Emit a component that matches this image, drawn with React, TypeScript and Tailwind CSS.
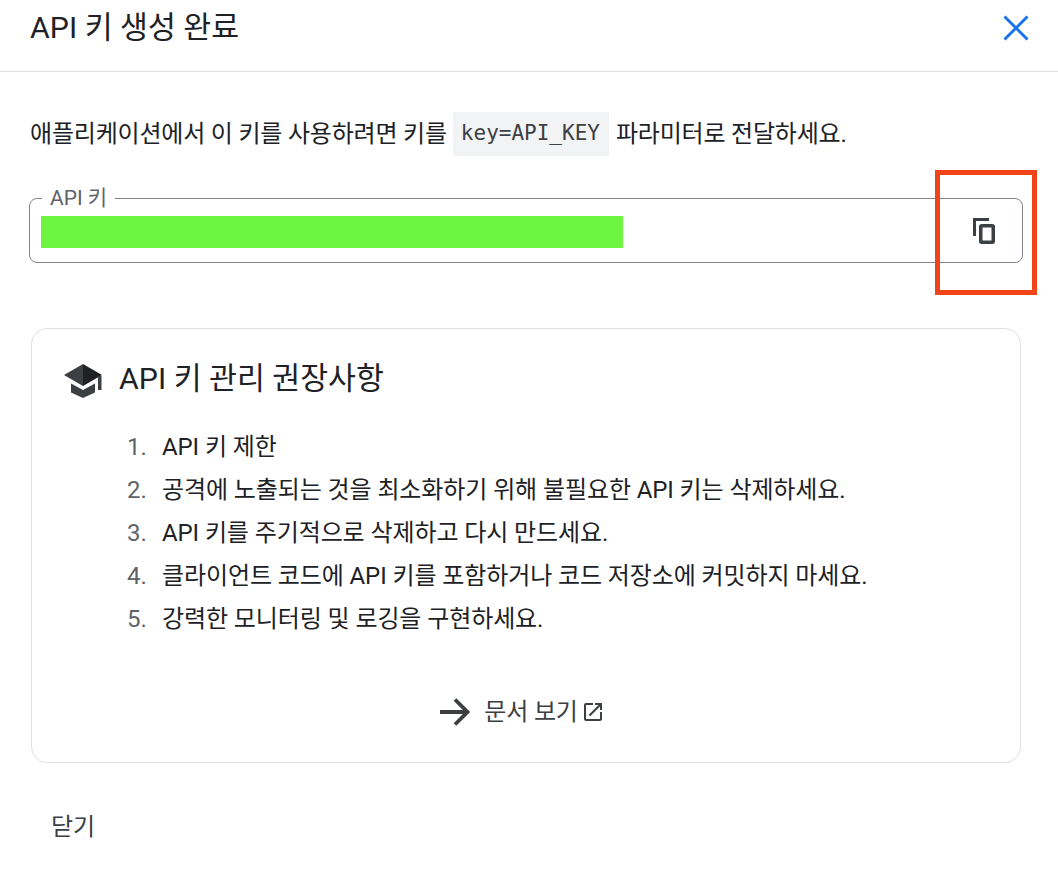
const FONT = "font-['Roboto','Noto_Sans_CJK_KR',sans-serif]";

const items = [
  "API 키 제한",
  "공격에 노출되는 것을 최소화하기 위해 불필요한 API 키는 삭제하세요.",
  "API 키를 주기적으로 삭제하고 다시 만드세요.",
  "클라이언트 코드에 API 키를 포함하거나 코드 저장소에 커밋하지 마세요.",
  "강력한 모니터링 및 로깅을 구현하세요.",
];

export default function App() {
  return (
    <div className={`${FONT} relative w-[1058px] h-[874px] overflow-hidden bg-white text-[#202124]`}>
      <header className="h-[72px] border-b border-[#e0e0e0] flex items-start justify-between pl-[30px] pr-[28px]">
        <h1 className="text-[30.3px] leading-[55px] font-normal">API 키 생성 완료</h1>
        <button className="mt-[14px] text-[#1a73e8]" aria-label="닫기">
          <svg width="28" height="28" viewBox="0 0 28 28" fill="none" stroke="currentColor" strokeWidth="3">
            <path d="M2.500 2.500 25.500 25.500M25.500 2.500 2.500 25.500" />
          </svg>
        </button>
      </header>

      <main className="pl-[30px] pr-[35px]">
        <p className="mt-[38px] h-[48px] flex items-center text-[24px] tracking-[-0.2px]">
          <span>애플리케이션에서 이 키를 사용하려면 키를</span>
          <code className="ml-[6px] mr-[7px] h-[44px] pl-[8px] pr-[9px] flex items-center bg-[#f1f3f4] font-['DejaVu_Sans_Mono',monospace] text-[21px] tracking-normal text-[#3c4043]">
            key=API_KEY
          </code>
          <span>파라미터로 전달하세요.</span>
        </p>

        <div className="mt-[30px] -ml-[1px] w-[994px]">
          <fieldset className="h-[75px] border border-[#80868b] rounded-[8px] pl-[12px] pr-0 m-0 min-w-0 flex items-center">
            <legend className="px-[8px] text-[21px] leading-[20px] text-[#5f6368]">API 키</legend>
            <div className="flex flex-1 items-center justify-between -ml-[1px] -mt-[6px]">
              <div className="w-[582px] h-[32px] bg-[#6ef542]" />
              <button className="mr-[27px] -mt-[3px] text-[#3c4043]" aria-label="복사">
                <svg className="block" width="22" height="26" viewBox="0 0 22 26" fill="none" stroke="currentColor">
                  <path d="M1.500 18V1.500H16" strokeWidth="3" />
                  <rect x="7.750" y="7.750" width="12.500" height="16.500" rx="1" strokeWidth="3.500" />
                </svg>
              </button>
            </div>
          </fieldset>
        </div>

        <section className="mt-[65px] ml-[1px] w-[990px] h-[435px] border border-[#e0e0e0] rounded-[16px] flex flex-col">
          <div className="mt-[29px] pl-[31px] flex items-center">
            <svg width="40" height="40" viewBox="0 0 40 40">
              <path d="M20 5 1 16l19 11z" fill="#3c4043" />
              <path d="M20 5v22l19-11z" fill="#202124" />
              <path d="M8 24.500v9L20 39l12-5.500v-9L20 31z" fill="#3c4043" />
              <rect x="35" y="17" width="3.500" height="14" fill="#3c4043" />
            </svg>
            <h2 className="ml-[16px] text-[30.3px] leading-[42px] font-normal">API 키 관리 권장사항</h2>
          </div>

          <ol className="mt-[25px] pl-[95px] text-[24px] tracking-[-0.1px]">
            {items.map((t, i) => (
              <li key={t} className="h-[43px] flex items-center">
                <span className="w-[35px] text-[#5f6368]">{i + 1}.</span>
                <span>{t}</span>
              </li>
            ))}
          </ol>

          <div className="mt-[54px] pr-[7px] flex items-center justify-center text-[#3c4043]">
            <svg width="30" height="28" viewBox="0 0 30 28" fill="none" stroke="currentColor" strokeWidth="3.800">
              <path d="M0 14h26M15 1.500 27.500 14 15 26.500" />
            </svg>
            <span className="ml-[14px] text-[24px] tracking-[-0.13px]">문서 보기</span>
            <svg className="ml-[3px]" width="24" height="24" viewBox="0 0 24 24" fill="currentColor">
              <path d="M19 19H5V5h7V3H5a2 2 0 0 0-2 2v14a2 2 0 0 0 2 2h14c1.100 0 2-.9 2-2v-7h-2v7zM14 3v2h3.590l-9.830 9.830 1.410 1.410L19 6.410V10h2V3h-7z" />
            </svg>
          </div>
        </section>

        <button className="mt-[47px] ml-[21px] text-[24px] tracking-[-0.13px] leading-[34px] text-[#3c4043]">닫기</button>
      </main>

      <div className="absolute left-[935px] top-[170px] w-[102px] h-[125px] border-[5px] border-[#f0441a]" />
    </div>
  );
}
